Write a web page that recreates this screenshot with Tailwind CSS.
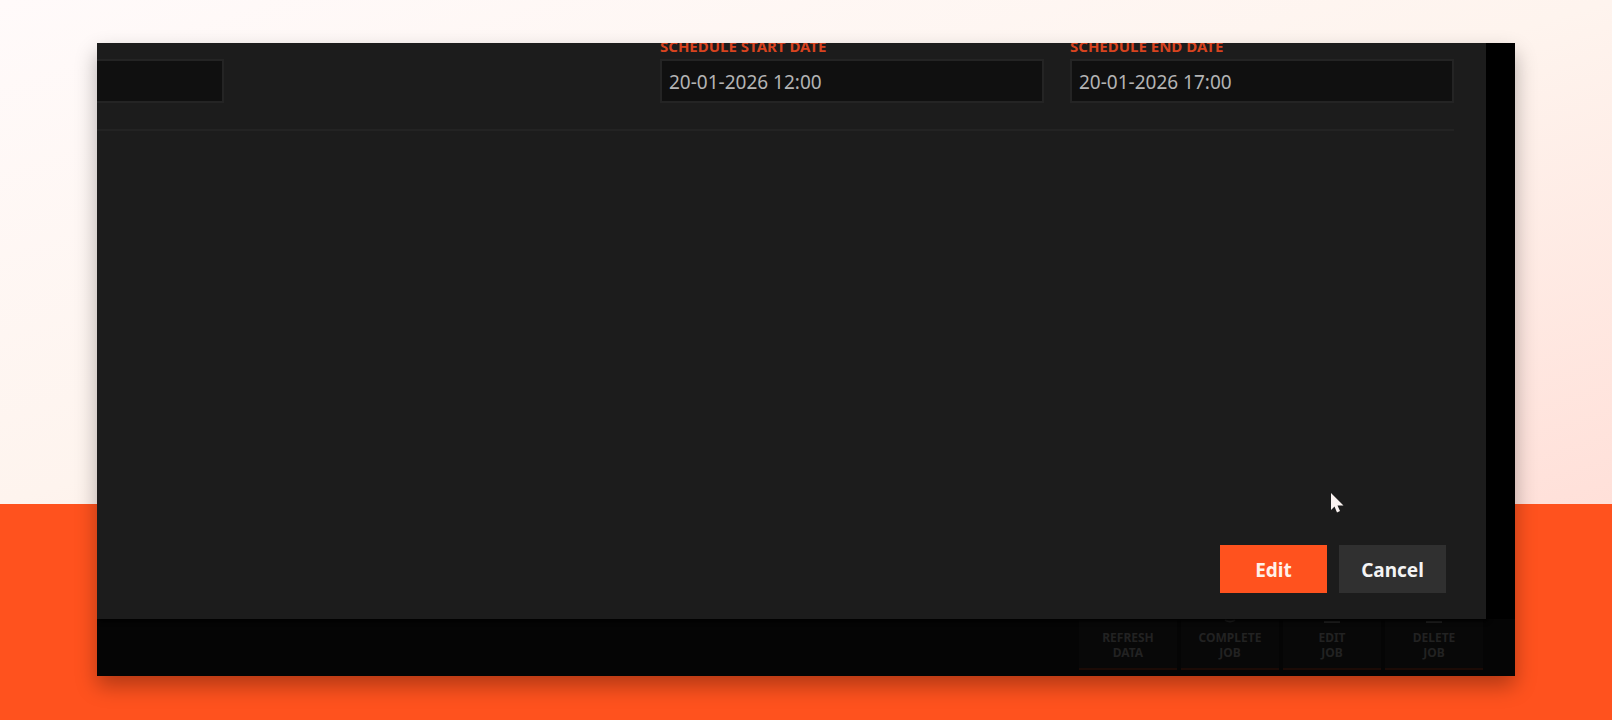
<!DOCTYPE html>
<html lang="en">
<head>
<meta charset="utf-8">
<meta name="viewport" content="width=device-width, initial-scale=1">
<title>Edit job</title>
<script src="https://cdn.jsdelivr.net/npm/@tailwindcss/browser@4"></script>
</head>
<body class="font-['Noto_Sans','Open_Sans',sans-serif]">
<main class="flex min-h-screen bg-[#ff521e] bg-[linear-gradient(to_bottom_right,#fffafa_0%,#fef4ee_50%,#ffe0d9_100%)] bg-[length:100%_70%] bg-no-repeat px-[97px] pt-[43px] pb-11">
  <div class="flex flex-1 flex-col overflow-hidden bg-black shadow-[0_10px_20px_rgba(0,0,0,0.3)]">
    <!-- Dialog -->
    <section aria-label="Edit job" class="z-10 mr-[29px] flex flex-1 flex-col bg-[#1c1c1c] shadow-[2px_2px_4px_#000]">
      <form class="-mt-[10px] -ml-[257px] mr-8 grid grid-cols-4 gap-[26px] border-b-2 border-[#232323] pb-[26px]">
        <div class="pt-[26px]">
          <input aria-label="Job" type="text" class="block h-11 w-full border-2 border-[#242424] bg-[#101010] px-2 text-[19px] text-[#b4b4b4]">
        </div>
        <div class="col-start-3">
          <label for="start" class="block text-[15px] leading-[26px] font-bold text-[#d8431f]">SCHEDULE START DATE</label>
          <input id="start" type="text" value="20-01-2026 12:00" class="block h-11 w-full border-2 border-[#242424] bg-[#101010] px-[7px] pt-[2px] text-[19px] text-[#b4b4b4]">
        </div>
        <div>
          <label for="end" class="block text-[15px] leading-[26px] font-bold text-[#d8431f]">SCHEDULE END DATE</label>
          <input id="end" type="text" value="20-01-2026 17:00" class="block h-11 w-full border-2 border-[#242424] bg-[#101010] px-[7px] pt-[2px] text-[19px] text-[#b4b4b4]">
        </div>
      </form>
      <div class="relative mt-auto flex justify-end gap-3 pr-10 pb-[26px]">
        <svg class="absolute right-[142px] bottom-[106px] h-5 w-[14px]" viewBox="0 0 14 20" fill="#fbf3f1" aria-hidden="true"><path d="M1 0V17L4.500 13.500L7 19.500L10 18L7.500 12.500H13.500Z"/></svg>
        <button type="button" class="h-12 w-[107px] bg-[#ff521e] pt-[2px] text-[19px] font-bold text-[#fff1e9]">Edit</button>
        <button type="button" class="h-12 w-[107px] bg-[#303030] pt-[2px] text-[19px] font-bold text-[#f4f4f4]">Cancel</button>
      </div>
    </section>
    <!-- Dimmed toolbar behind the dialog -->
    <footer class="flex h-[57px] justify-end gap-1 bg-[#050505] pr-8 pb-[6px] text-[12px] leading-[15px] font-bold text-[#222]">
      <button type="button" class="flex w-[98px] flex-col items-center border-b-2 border-[#1c0b06] bg-[#080808]"><span class="h-[11px]"></span>REFRESH<br>DATA</button>
      <button type="button" class="flex w-[98px] flex-col items-center border-b-2 border-[#1c0b06] bg-[#080808]"><svg class="h-[11px] w-4" viewBox="0 0 16 11" fill="none" stroke="#222" stroke-width="2" aria-hidden="true"><path d="M3 1Q8 4 13 1"/></svg>COMPLETE<br>JOB</button>
      <button type="button" class="flex w-[98px] flex-col items-center border-b-2 border-[#1c0b06] bg-[#080808]"><svg class="h-[11px] w-4" viewBox="0 0 16 11" fill="none" stroke="#222" stroke-width="2" aria-hidden="true"><path d="M0 3H16"/></svg>EDIT<br>JOB</button>
      <button type="button" class="flex w-[98px] flex-col items-center border-b-2 border-[#1c0b06] bg-[#080808]"><svg class="h-[11px] w-4" viewBox="0 0 16 11" fill="none" stroke="#222" stroke-width="2" aria-hidden="true"><path d="M0 3H16"/></svg>DELETE<br>JOB</button>
    </footer>
  </div>
</main>
</body>
</html>
